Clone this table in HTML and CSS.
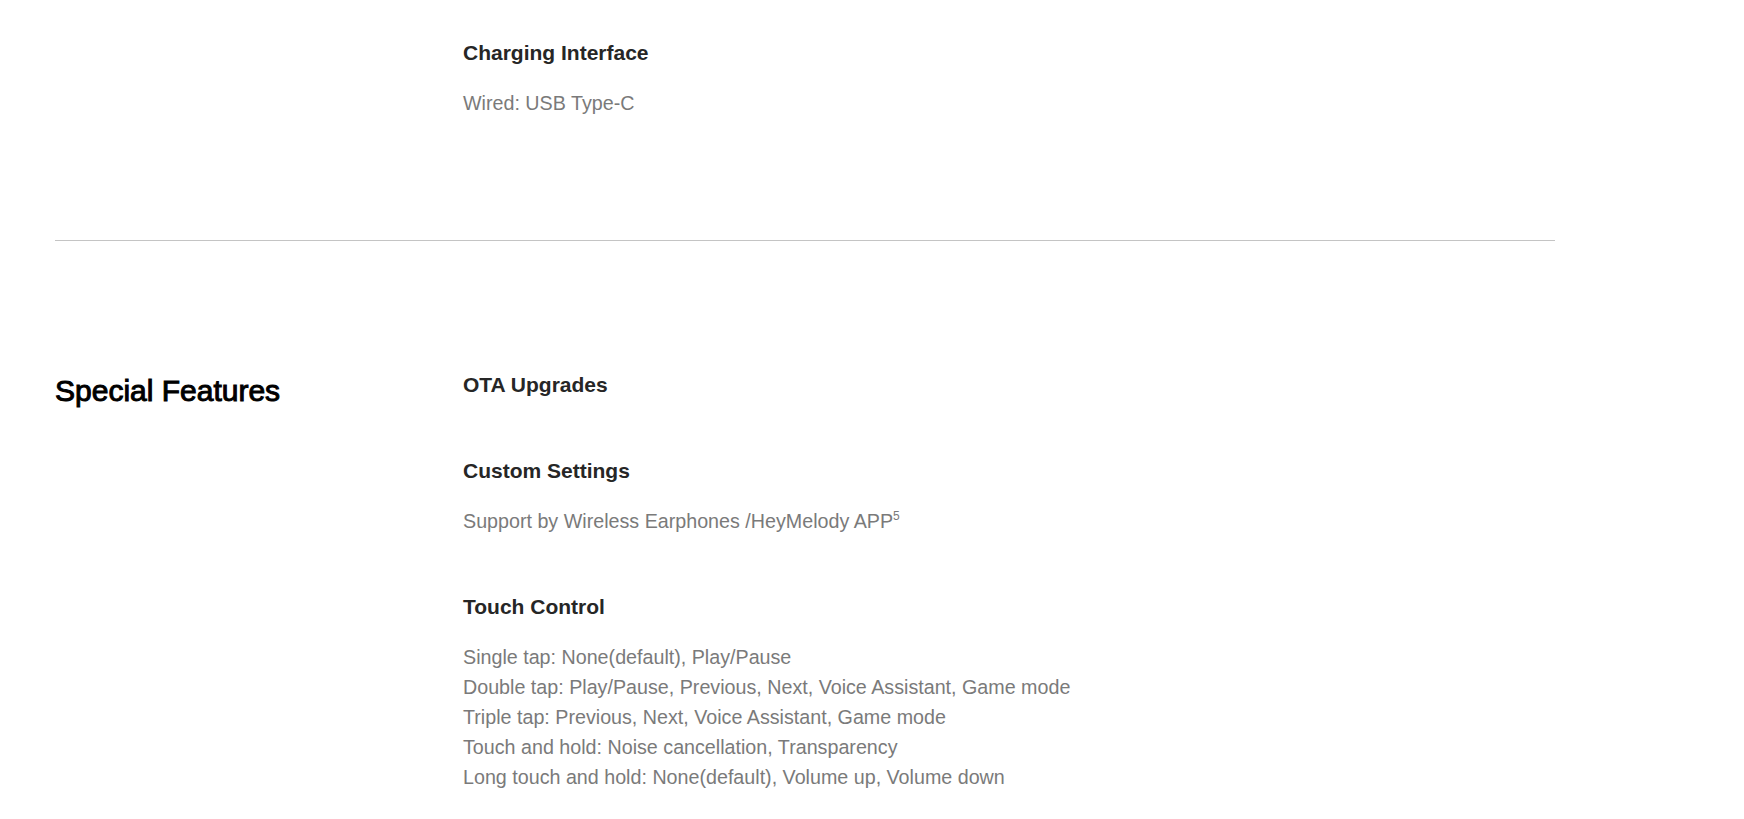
FILE: index.html
```html
<!DOCTYPE html>
<html lang="en">
<head>
<meta charset="utf-8">
<title>Specs</title>
<link rel="stylesheet" href="styles.css">
</head>
<body>
<div class="page">
  <section class="spec-section first">
    <div class="spec-title"></div>
    <div class="spec-list">
      <div class="spec-item">
        <h3 class="spec-name">Charging Interface</h3>
        <p class="spec-desc">Wired: USB Type-C</p>
      </div>
    </div>
  </section>
  <hr class="divider">
  <section class="spec-section">
    <h2 class="spec-title">Special Features</h2>
    <div class="spec-list">
      <div class="spec-item">
        <h3 class="spec-name">OTA Upgrades</h3>
      </div>
      <div class="spec-item">
        <h3 class="spec-name">Custom Settings</h3>
        <p class="spec-desc">Support by Wireless Earphones /HeyMelody APP<sup>5</sup></p>
      </div>
      <div class="spec-item">
        <h3 class="spec-name">Touch Control</h3>
        <p class="spec-desc">Single tap: None(default), Play/Pause<br>Double tap: Play/Pause, Previous, Next, Voice Assistant, Game mode<br>Triple tap: Previous, Next, Voice Assistant, Game mode<br>Touch and hold: Noise cancellation, Transparency<br>Long touch and hold: None(default), Volume up, Volume down</p>
      </div>
    </div>
  </section>
</div>
</body>
</html>
```
FILE: styles.css
```css
html, body {
  margin: 0;
  padding: 0;
  background: #ffffff;
}
body {
  font-family: "Liberation Sans", Arial, sans-serif;
  color: #222222;
}
.page {
  width: 1500px;
  margin-left: 55px;
  padding-top: 38px;
}
.spec-section {
  display: flex;
  padding-top: 129px;
}
.spec-section.first {
  padding-top: 0;
  padding-bottom: 122px;
}
.spec-title {
  width: 408px;
  flex: none;
  margin: 6px 0 0 0;
  font-size: 30px;
  line-height: 30px;
  font-weight: 400;
  letter-spacing: 0;
  color: #000000;
  -webkit-text-stroke: 1px #000000;
}
.spec-list {
  display: flex;
  flex-direction: column;
  gap: 56px;
}
.spec-name {
  margin: 0;
  font-size: 21px;
  line-height: 30px;
  font-weight: 700;
  letter-spacing: 0;
  color: #262626;
}
.spec-desc {
  margin: 20px 0 0 0;
  font-size: 19.7px;
  line-height: 30px;
  color: #7a7a7a;
}
.spec-desc sup {
  font-size: 12px;
  line-height: 0;
  vertical-align: 8px;
}
.divider {
  border: 0;
  height: 1px;
  background: #c4c4c4;
  margin: 0;
  width: 1500px;
}
```
